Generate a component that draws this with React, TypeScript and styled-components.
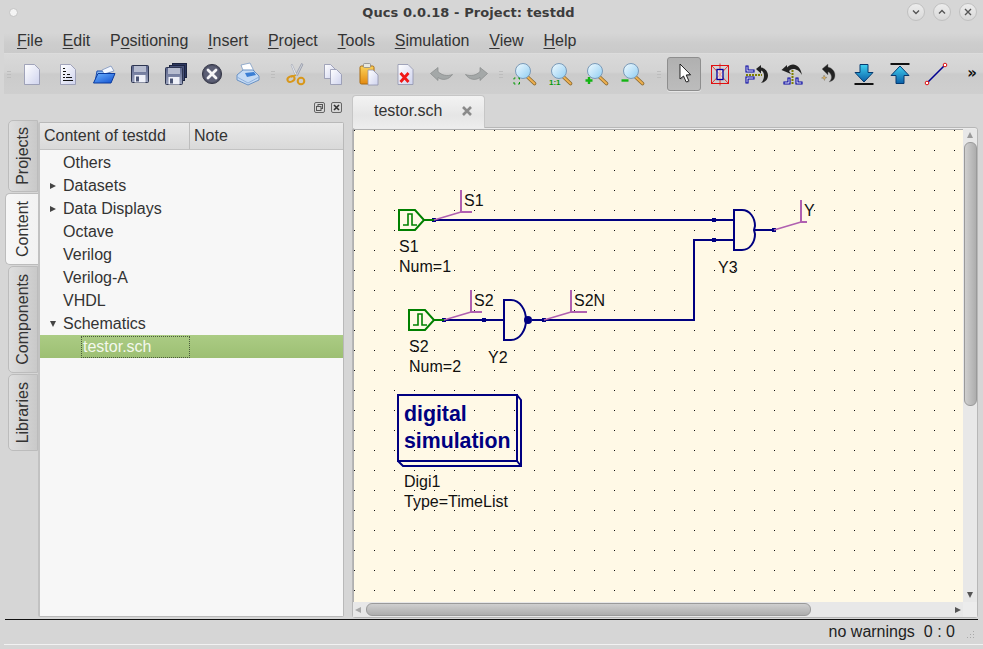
import React from "react";
import styled, { createGlobalStyle } from "styled-components";

const Global = createGlobalStyle`
  html, body { margin: 0; padding: 0; width: 983px; height: 649px; overflow: hidden; background: #d6d6d6; }
  * { box-sizing: border-box; }
  #root { width: 983px; height: 649px; }
`;
const Win = styled.div`
  width: 983px; height: 649px; display: flex; flex-direction: column;
  background: #d6d6d6; color: #2e2e2e;
  font-family: "Liberation Sans", Arial, sans-serif; font-size: 16px;
`;
const TitleBar = styled.div`
  height: 28px; flex: none; display: flex; align-items: center; padding: 0 6px 4px 8px; background: #d6d6d6;
`;
const TitleDot = styled.span`
  width: 9px; height: 9px; border-radius: 50%; background: #f4f4f4; border: 1px solid #c4c4c4; flex: none; margin-left: 1px;
`;
const TitleText = styled.div`
  flex: 1; padding-left: 12px; text-align: center; font-family: "DejaVu Sans", sans-serif; font-weight: 700; font-size: 13px; color: #3c3c3c; letter-spacing: .08px;
`;
const WinBtns = styled.div`display: flex; gap: 8px;`;
const WinBtn = styled.span`
  width: 18px; height: 18px; border-radius: 50%; flex: none; display: flex; align-items: center; justify-content: center;
  background: linear-gradient(#ededed, #d8d8d8); border: 1px solid #c0c0c0; color: #555;
`;
const MenuBar = styled.div`
  height: 26px; flex: none; margin-left: 4px; padding-left: 3px; display: flex; align-items: center;
  background: linear-gradient(#d6d6d6 0%, #d6d6d6 20%, #cdcdcd 60%, #cacaca 100%); border-bottom: 1px solid #dcdcdc;
`;
const MenuItem = styled.span`padding: 0 10px; margin-right: -.2px; color: #333; line-height: 24px;`;
const Mn = styled.span`text-decoration: underline; text-underline-offset: 2px;`;
const ToolBar = styled.div`
  height: 40px; flex: none; margin-left: 4px; display: flex; align-items: center;
  background: linear-gradient(#d9d9d9 0%, #d3d3d3 45%, #cbcbcb 50%, #cfcfcf 100%);
`;
const Slot = styled.div<{ $on?: boolean }>`
  width: 34px; height: 34px; margin: 0 1px; flex: none; display: flex; align-items: center; justify-content: center; border-radius: 3px;
  ${p => p.$on ? "background: linear-gradient(#b0b0b0,#bcbcbc); border: 1px solid #8e8e8e; box-shadow: 0 1px 0 #e6e6e6;" : ""}
`;
const Sep = styled.div<{ $w: number }>`
  width: ${p => p.$w}px; flex: none; align-self: stretch; display: flex; align-items: center; justify-content: center;
  &::before { content: ""; width: 4px; height: 7px; background: repeating-linear-gradient(#bdbdbd 0 1px, transparent 1px 3px); }
`;
const More = styled.span`width: 36px; flex: none; text-align: center; font-weight: 700; font-size: 15px; color: #111; padding-bottom: 3px; font-family: "DejaVu Sans", sans-serif;`;
const Main = styled.div`flex: 1; min-height: 0; display: flex; padding: 0 5px 1px 5px;`;
const Dock = styled.div`width: 347px; flex: none; display: flex; flex-direction: column;`;
const DockTitle = styled.div`height: 26px; flex: none; display: flex; justify-content: flex-end; align-items: flex-start; gap: 6px; padding: 8px 10px 0 0;`;
const DockBody = styled.div`flex: 1; min-height: 0; display: flex; padding-right: 8px;`;
const VTabs = styled.div`width: 33px; flex: none; display: flex; flex-direction: column; gap: 1px;`;
const VTab = styled.div<{ $on?: boolean; $h: number }>`
  height: ${p => p.$h}px; flex: none; display: flex; align-items: center; justify-content: center;
  margin-left: ${p => p.$on ? 0 : 3}px; border: 1px solid #bcbcbc; border-right: ${p => p.$on ? "none" : "1px solid #bcbcbc"};
  border-radius: 5px 0 0 5px; color: #333;
  background: ${p => p.$on ? "linear-gradient(90deg,#f7f7f7,#f2f2f2)" : "linear-gradient(90deg,#dedede,#c9c9c9)"};
  padding-left: ${p => p.$on ? 2 : 0}px;
  span { writing-mode: vertical-rl; transform: rotate(180deg); }
`;
const Tree = styled.div`
  flex: 1; margin-top: 2px; margin-bottom: 1px; background: #f7f7f7; border: 1px solid #b9b9b9; border-left: 2px solid #c2c2c2; display: flex; flex-direction: column; border-radius: 2px;
`;
const THead = styled.div`height: 27px; flex: none; display: flex; background: linear-gradient(#e9e9e9,#d9d9d9); border-bottom: 1px solid #c2c2c2;`;
const THCell = styled.div<{ $w?: number }>`
  ${p => p.$w ? `width:${p.$w}px; border-right:1px solid #bdbdbd;` : "flex:1;"} padding-left: 4px; display: flex; align-items: center; color: #333;
`;
const TRows = styled.div`flex: 1; padding-top: 1px;`;
const TRow = styled.div<{ $sel?: boolean }>`
  height: 23px; display: flex; align-items: center; padding-left: ${p => p.$sel ? 41 : 8}px; color: #333;
  ${p => p.$sel ? "background: linear-gradient(#abcc84,#9dbf73);" : ""}
`;
const Arrow = styled.span<{ $k: string }>`
  width: 10px; flex: none; display: flex; align-items: center; justify-content: center;
  &::before {
    content: ""; display: ${p => p.$k === "n" ? "none" : "block"}; width: 0; height: 0;
    ${p => p.$k === "r"
      ? "border-left: 6px solid #444; border-top: 3.5px solid transparent; border-bottom: 3.5px solid transparent;"
      : "border-top: 6px solid #444; border-left: 3.5px solid transparent; border-right: 3.5px solid transparent;"}
  }
`;
const RowText = styled.span`padding-left: 5px;`;
const SelCell = styled.span`
  width: 109px; height: 22px; display: flex; align-items: center; padding-left: 1px; color: #f4f8ee; border: 1px dotted #4c5c3c;
`;
const Editor = styled.div`width: 626px; flex: none; display: flex; flex-direction: column;`;
const TabBar = styled.div`height: 33px; flex: none; display: flex; align-items: flex-start; padding-top: 1px; position: relative; z-index: 1;`;
const DocTab = styled.div`
  width: 133px; height: 33px; display: flex; align-items: center; justify-content: space-between; padding: 0 11px 2px 21px;
  background: linear-gradient(#f3f3f3,#e6e6e6 60%,#ededed); border: 1px solid #c6c6c6; border-bottom: none; border-radius: 4px 4px 0 0; color: #333;
`;
const Pane = styled.div`
  flex: 1; min-height: 0; border: 1px solid #b7b7b7; border-radius: 3px; background: #ececec; padding-top: 1px;
  display: grid; grid-template-columns: 1fr 14px; grid-template-rows: 1fr 15px;
`;
const Canvas = styled.div`border-left: 1px solid #b0b0b0; border-top: 1px solid #b0b0b0; overflow: hidden; background: #fff9e6;`;
const Sheet = styled.svg`display: block; font-family: "Liberation Sans", Arial, sans-serif; font-size: 16px;`;
const VBar = styled.div`display: flex; flex-direction: column; align-items: center; background: #e8e8e8; padding-top: 3px;`;
const VThumb = styled.div`
  width: 13px; height: 264px; margin-top: 4px; border-radius: 6px; border: 1px solid #9a9a9a; background: linear-gradient(90deg,#cfcfcf,#adadad);
`;
const Spacer = styled.div`flex: 1;`;
const Tri = styled.span<{ $d: string }>`
  width: 0; height: 0; flex: none; display: block;
  ${p => p.$d === "u" ? "border-bottom: 6px solid #9a9a9a; border-left: 3.5px solid transparent; border-right: 3.5px solid transparent;" : ""}
  ${p => p.$d === "d" ? "border-top: 6px solid #555; border-left: 3.5px solid transparent; border-right: 3.5px solid transparent;" : ""}
  ${p => p.$d === "l" ? "border-right: 6px solid #a8a8a8; border-top: 3.5px solid transparent; border-bottom: 3.5px solid transparent;" : ""}
  ${p => p.$d === "r" ? "border-left: 6px solid #555; border-top: 3.5px solid transparent; border-bottom: 3.5px solid transparent;" : ""}
`;
const VEnd = styled.div`height: 15px; flex: none; display: flex; align-items: center;`;
const HBar = styled.div`display: flex; align-items: center; background: #e8e8e8; padding-left: 2px;`;
const HThumb = styled.div`
  width: 445px; height: 13px; margin-left: 5px; border-radius: 6px; border: 1px solid #9a9a9a; background: linear-gradient(#cfcfcf,#adadad);
`;
const HEnd = styled.div`width: 10px; flex: none; display: flex; justify-content: center;`;
const Corner = styled.div`background: #ececec;`;
const BlackLine = styled.div`height: 1px; flex: none; margin: 0 5px; background: #111;`;
const Status = styled.div`
  height: 25px; flex: none; margin-left: 4px; display: flex; align-items: center; justify-content: flex-end; border-bottom: 1px solid #f2f2f2; padding-right: 8px; color: #222;
`;
const StatusText = styled.span`margin-right: 9px;`;
const Grip = styled.svg`margin-left: 3px; margin-top: 6px; flex: none;`;
const Bottom = styled.div`height: 4px; flex: none;`;

const Defs = () => (
  <svg width="0" height="0" style={{ display: "block", height: 0 }}>
    <defs>
      <linearGradient id="pg" x1="0" y1="0" x2="1" y2="1"><stop offset="0" stopColor="#fff" /><stop offset="1" stopColor="#cfd3ee" /></linearGradient>
      <linearGradient id="glass" x1="0" y1="0" x2="1" y2="1"><stop offset="0" stopColor="#f2fbff" /><stop offset="1" stopColor="#8fcdf2" /></linearGradient>
      <linearGradient id="fold" x1="0" y1="0" x2="1" y2="1"><stop offset="0" stopColor="#6fb4ff" /><stop offset="1" stopColor="#0f4fd0" /></linearGradient>
      <linearGradient id="disk" x1="0" y1="0" x2="0" y2="1"><stop offset="0" stopColor="#59638a" /><stop offset="1" stopColor="#9aa2bc" /></linearGradient>
      <linearGradient id="org" x1="0" y1="0" x2="0" y2="1"><stop offset="0" stopColor="#fbd25a" /><stop offset="1" stopColor="#e48a10" /></linearGradient>
      <linearGradient id="ar" x1="0" y1="0" x2="0" y2="1"><stop offset="0" stopColor="#3fd0f0" /><stop offset="1" stopColor="#0a5fa8" /></linearGradient>
    </defs>
  </svg>
);

const I = ({ children }: { children: React.ReactNode }) => <svg width="24" height="24" viewBox="0 0 24 24" fill="none">{children}</svg>;
const Page = ({ x = 4.5, y = 2.5, w = 15, h = 20 }: { x?: number; y?: number; w?: number; h?: number }) => (
  <path d={`M${x} ${y}H${x + w - 5}L${x + w} ${y + 5}V${y + h}H${x}Z`} fill="url(#pg)" stroke="#8f93ad" strokeWidth=".8" />
);
const Floppy = ({ x = 0, y = 0 }: { x?: number; y?: number }) => (
  <g transform={`translate(${x} ${y})`}>
    <rect x="3.5" y="3.5" width="17" height="17" rx="1" fill="url(#disk)" stroke="#2d3550" />
    <rect x="6" y="4" width="12" height="6" fill="#b6bccf" />
    <rect x="6.5" y="13" width="11" height="7.5" fill="#eef0f8" />
    <rect x="8" y="14.5" width="3" height="5" fill="#4a5474" />
  </g>
);
const Mag = ({ children }: { children?: React.ReactNode }) => (
  <I>
    <path d="M14 14.5l7.5 7" stroke="#8a6a30" strokeWidth="3.6" strokeLinecap="round" />
    <path d="M14 14.5l7.5 7" stroke="#eeb050" strokeWidth="2" strokeLinecap="round" />
    <circle cx="10" cy="9" r="7.5" fill="url(#glass)" stroke="#7a9ab8" />
    {children}
  </I>
);
const Curve = ({ flip }: { flip?: boolean }) => (
  <I>
    <g transform={flip ? "matrix(-1 0 0 1 24 0)" : undefined}>
      <path d="M1.5 11.5L9 5.5V9.5C13 13.5 18 14.5 23.500 12.500C20 17.500 14 19 9 15.500V18.500Z" fill="#a4a8a8" stroke="#868a8a" strokeWidth=".7" />
    </g>
  </I>
);

const icons: React.ReactNode[] = [
  <I><Page /></I>,
  <I><Page /><g fill="#111"><rect x="7" y="6" width="2" height="1" /><rect x="7" y="9" width="3" height="1" /><rect x="7" y="12" width="2" height="1" /><rect x="11" y="12" width="3" height="1" /><rect x="7" y="15" width="2" height="1" /><rect x="10" y="15" width="6" height="1" /><rect x="7" y="18" width="10" height="1" /></g></I>,
  <I><path d="M3 20L5 9h5l1 1h7l-1 2" fill="#8cbcf0" stroke="#1a4db0" /><path d="M10 8l9-4 3 5-10 3z" fill="#f4f8ff" stroke="#6d86b8" strokeWidth=".7" /><path d="M1.5 21L6 11.5h17L19 21z" fill="url(#fold)" stroke="#0b3a9c" /></I>,
  <I><Floppy /></I>,
  <I><rect x="8.5" y="1.5" width="14" height="14" fill="#2d3860" stroke="#1c2440" /><rect x="5.5" y="3.5" width="15" height="15" fill="#48527a" stroke="#1c2440" /><Floppy x={-2} y={2} /></I>,
  <I><circle cx="12" cy="12" r="9.6" fill="#4b4e62" stroke="#383a4a" /><circle cx="12" cy="12" r="8" fill="#5c5f75" /><path d="M8 8l8 8M16 8l-8 8" stroke="#f6f6f8" strokeWidth="2.8" strokeLinecap="round" /></I>,
  <I><path d="M5 3l9-2 4 8-10 2z" fill="#fff" stroke="#7d9cc4" strokeWidth=".8" /><path d="M1 13l6-5 10 0 6 6v4l-11 5-11-5z" fill="#c4daf4" stroke="#6a92c4" /><path d="M1 15l11 6 11-6" stroke="#8eb0dc" fill="none" /><path d="M9 11l9-1 2 3-9 2z" fill="#3a7ed4" /></I>,
  <I><path d="M16.5 1.5L11 12l1.5 1.5L18 2.5z" fill="#c8ccd4" stroke="#83889a" strokeWidth=".6" /><path d="M7 2l5 11-1.5 1L6 3z" fill="#eef0f4" stroke="#9da2b0" strokeWidth=".6" /><path d="M11 13l-5 2" stroke="#d6a020" strokeWidth="1.5" /><ellipse cx="6" cy="17" rx="3.7" ry="2.6" stroke="#d8971a" strokeWidth="2" transform="rotate(-25 6 17)" /><ellipse cx="16" cy="19" rx="3.3" ry="3.3" stroke="#d8971a" strokeWidth="2" /></I>,
  <I><Page x={3.5} y={2.5} w={11} h={14} /><Page x={9.5} y={7.5} w={11} h={15} /></I>,
  <I><rect x="3" y="4" width="14" height="18" rx="1.5" fill="url(#org)" stroke="#a86a10" /><rect x="6.5" y="1.5" width="7" height="4" rx="1" fill="#e8e8e0" stroke="#808080" strokeWidth=".7" /><Page x={11} y={8} w={10} h={15} /></I>,
  <I><Page x={5} y={2.5} w={15} h={20} /><path d="M7.5 11l8 9M15.5 11l-8 9" stroke="#f01818" strokeWidth="2.8" /></I>,
  <Curve />,
  <Curve flip />,
  <Mag><path d="M1 17.5v-1.5h1.5M5 16h1.5v1.5M1 20v2h1.5M5 22h1.5v-2" stroke="#0a9a0a" /></Mag>,
  <Mag><text x="0" y="23" fontSize="8" fontWeight="700" fill="#0a9a0a" fontFamily="'Liberation Sans', sans-serif">1:1</text></Mag>,
  <Mag><path d="M4 15v7M.5 18.5h7" stroke="#14b414" strokeWidth="2.4" /></Mag>,
  <Mag><path d="M.5 18.5h7" stroke="#14b414" strokeWidth="2.4" /></Mag>,
  <I><path d="M8 2v15l3.5-3 2.7 6 2.6-1.2-2.6-5.8 4.3-.4z" fill="#50505a" opacity=".35" transform="translate(1 1)" /><path d="M8 2v15l3.5-3 2.7 6 2.6-1.2-2.6-5.8 4.3-.4z" fill="#fff" stroke="#111" strokeWidth=".9" /></I>,
  <I><rect x="3.5" y="3.5" width="17" height="18" stroke="#e01010" /><path d="M3.5 3.5l17 18M20.5 3.5l-17 18M12 1.5v22" stroke="#e01010" strokeWidth=".8" /><rect x="9" y="7.5" width="6" height="10" fill="#fff" fillOpacity=".5" stroke="#0000a0" strokeWidth="1.3" /></I>,
  <I><path d="M2 4H4V8H10V10H2ZM2 15H10V17H4V21H2Z" fill="#fff" stroke="#0000a0" strokeWidth="1.1" /><path d="M2 13H18" stroke="#808000" strokeWidth="2" strokeDasharray="2 1" /><path d="M12 7l5-4v2.5c4 .5 7 4 7 8 0 4-3 7-7 7.5 2-2 3-4.5 3-7 0-3-1-5-3-5.5v3z" fill="#222" /></I>,
  <I><path d="M8 16h2v6H4v-2h4zM16 16h2v4h4v2h-6z" fill="#fff" stroke="#0000a0" strokeWidth="1.1" /><path d="M12.5 5V23" stroke="#808000" strokeWidth="2" strokeDasharray="2 1" /><path d="M1.5 8L7 3V5.5C12 0 20 2 22 13C19 7 12 5 9 9L11 12Z" fill="#222" /></I>,
  <I><path d="M6 7l6-5v3c4 1 7 4 7 8 0 4-2 6-6 7 2-2 3-4 2-7-1-2-2-3-3-3v3z" fill="#222" stroke="#777" strokeWidth=".4" /><path d="M8 13l1 2 2 .5-2 1-.5 2-1-2-2-.5 2-1z" fill="#d8b060" stroke="#555" strokeWidth=".3" /></I>,
  <I><path d="M8 2.5h8v8h5L12 20 3 10.5h5z" fill="url(#ar)" stroke="#063a70" /><rect x="2.5" y="21" width="19" height="2" fill="#111" /></I>,
  <I><path d="M8 21.5h8v-8h5L12 4 3 13.5h5z" fill="url(#ar)" stroke="#063a70" /><rect x="2.5" y="1" width="19" height="2" fill="#111" /></I>,
  <I><path d="M3 21L21 3" stroke="#000090" strokeWidth="1.6" /><circle cx="3" cy="21" r="1.8" fill="#fff" stroke="#e01010" /><circle cx="21" cy="3" r="1.8" fill="#fff" stroke="#e01010" /></I>,
];
const groups: [number, number, number][] = [[0, 7, 13], [7, 13, 12], [13, 17, 15], [17, 25, 0]];
const menus = [["F", "ile"], ["E", "dit"], ["P", "ositioning"], ["I", "nsert"], ["P", "roject"], ["T", "ools"], ["S", "imulation"], ["V", "iew"], ["H", "elp"]] as const;
const rows: [string, string][] = [["n", "Others"], ["r", "Datasets"], ["r", "Data Displays"], ["n", "Octave"], ["n", "Verilog"], ["n", "Verilog-A"], ["n", "VHDL"], ["d", "Schematics"]];
const vtabs: [string, number, boolean][] = [["Projects", 72, false], ["Content", 72, true], ["Components", 107, false], ["Libraries", 77, false]];

const NAVY = "#000080";
const PUR = "#b060b0";
const Wire = ({ d }: { d: string }) => <path d={d} stroke={NAVY} strokeWidth="2" fill="none" />;
const Node = ({ x, y }: { x: number; y: number }) => <rect x={x - 2} y={y - 2} width="4" height="4" fill={NAVY} />;
const WireLabel = ({ x, y, w, t }: { x: number; y: number; w: number; t: string }) => (
  <g>
    <path d={`M${x} ${y}L${x + 27} ${y - 8}`} stroke={PUR} strokeWidth="1.5" fill="none" />
    <path d={`M${x + 27} ${y - 30}V${y - 8}H${x + 27 + w}`} stroke={PUR} strokeWidth="2" fill="none" />
    <text x={x + 30} y={y - 14} fill="#111">{t}</text>
  </g>
);
const Port = ({ x, y }: { x: number; y: number }) => (
  <g transform={`translate(${x} ${y})`} fill="none">
    <path d="M0 0H16L25 10L16 20H0Z" stroke="#008000" strokeWidth="2" />
    <path d="M4 15H9V4H13V15H18" stroke="#008000" strokeWidth="1.6" />
    <path d="M25 10H35" stroke="#008000" strokeWidth="2" />
  </g>
);

const Schematic = () => (
  <Sheet width="609" height="472" viewBox="354 130 609 472">
    <defs>
      <pattern id="dots" x="354" y="130" width="20" height="20" patternUnits="userSpaceOnUse">
        <rect x="0" y="0" width="1" height="1" fill="#111" />
      </pattern>
    </defs>
    <rect x="354" y="130" width="609" height="472" fill="url(#dots)" />
    <Wire d="M434 220H734" /><Node x={434} y={220} /><Node x={714} y={220} />
    <Wire d="M734 240H694V320H532" /><Node x={714} y={240} /><Node x={544} y={320} />
    <Wire d="M444 320H503" /><Node x={444} y={320} /><Node x={484} y={320} />
    <Wire d="M755 230H774" /><Node x={774} y={230} />
    <Port x={399} y={210} />
    <Port x={409} y={310} />
    <WireLabel x={434} y={220} w={11} t="S1" />
    <WireLabel x={444} y={320} w={11} t="S2" />
    <WireLabel x={544} y={320} w={16} t="S2N" />
    <WireLabel x={774} y={230} w={6} t="Y" />
    <path d="M504 300H511C520 300 526 310 526 320C526 330 520 340 511 340H504Z" stroke={NAVY} strokeWidth="2" fill="none" />
    <circle cx="528" cy="320" r="4" fill={NAVY} />
    <path d="M734 210H742C750 210 755 218 755 226L754 230L755 234C755 242 750 250 742 250H734Z" stroke={NAVY} strokeWidth="2" fill="none" />
    <text x="399" y="252" fill="#111">S1</text>
    <text x="399" y="272" fill="#111">Num=1</text>
    <text x="409" y="352" fill="#111">S2</text>
    <text x="409" y="372" fill="#111">Num=2</text>
    <text x="488" y="363" fill="#111">Y2</text>
    <text x="718" y="273" fill="#111">Y3</text>
    <path d="M398 395H517V461H398ZM517 395L521 400V466H403L398 461M517 461L521 466" stroke={NAVY} strokeWidth="2" fill="none" />
    <text x="404" y="421" fill={NAVY} fontWeight="700" fontSize="21.3">digital</text>
    <text x="404" y="448" fill={NAVY} fontWeight="700" fontSize="21.3">simulation</text>
    <text x="404" y="487" fill="#111">Digi1</text>
    <text x="404" y="507" fill="#111">Type=TimeList</text>
  </Sheet>
);

export default function App() {
  return (
    <Win>
      <Global />
      <Defs />
      <TitleBar>
        <TitleDot />
        <TitleText>Qucs 0.0.18 - Project: testdd</TitleText>
        <WinBtns>
          <WinBtn><svg width="10" height="10" viewBox="0 0 10 10"><path d="M2 3.5L5 6.5L8 3.5" stroke="#555" strokeWidth="1.4" fill="none" /></svg></WinBtn>
          <WinBtn><svg width="10" height="10" viewBox="0 0 10 10"><path d="M2 6.5L5 3.5L8 6.5" stroke="#555" strokeWidth="1.4" fill="none" /></svg></WinBtn>
          <WinBtn><svg width="10" height="10" viewBox="0 0 10 10"><path d="M2 2L8 8M8 2L2 8" stroke="#555" strokeWidth="1.4" fill="none" /></svg></WinBtn>
        </WinBtns>
      </TitleBar>
      <MenuBar>
        {menus.map(m => (
          <MenuItem key={m[0] + m[1]}>
            {m[1] === "ositioning" ? <>P<Mn>o</Mn>sitioning</> : <><Mn>{m[0]}</Mn>{m[1]}</>}
          </MenuItem>
        ))}
      </MenuBar>
      <ToolBar>
        <Sep $w={10} />
        {groups.map(([a, b, w], g) => (
          <React.Fragment key={g}>
            {icons.slice(a, b).map((ic, i) => <Slot key={i} $on={a + i === 17}>{ic}</Slot>)}
            {w > 0 && <Sep $w={w} />}
          </React.Fragment>
        ))}
        <More>»</More>
      </ToolBar>
      <Main>
        <Dock>
          <DockTitle>
            <svg width="11" height="11" viewBox="0 0 11 11" fill="none"><rect x=".5" y=".5" width="10" height="10" rx="1.5" stroke="#666" /><rect x="4" y="2.5" width="4.5" height="4" stroke="#555" /><rect x="2.5" y="4.5" width="4.5" height="4" fill="#d6d6d6" stroke="#555" /></svg>
            <svg width="11" height="11" viewBox="0 0 11 11" fill="none"><rect x=".5" y=".5" width="10" height="10" rx="1.5" stroke="#666" /><path d="M3 3L8 8M8 3L3 8" stroke="#333" strokeWidth="1.6" /></svg>
          </DockTitle>
          <DockBody>
            <VTabs>
              {vtabs.map(([t, h, on]) => <VTab key={t} $h={h} $on={on}><span>{t}</span></VTab>)}
            </VTabs>
            <Tree>
              <THead><THCell $w={150}>Content of testdd</THCell><THCell>Note</THCell></THead>
              <TRows>
                {rows.map(([k, t]) => <TRow key={t}><Arrow $k={k} /><RowText>{t}</RowText></TRow>)}
                <TRow $sel><SelCell>testor.sch</SelCell></TRow>
              </TRows>
            </Tree>
          </DockBody>
        </Dock>
        <Editor>
          <TabBar>
            <DocTab>testor.sch
              <svg width="12" height="12" viewBox="0 0 12 12"><path d="M2 2L10 10M10 2L2 10" stroke="#8a8a8a" strokeWidth="2.6" /></svg>
            </DocTab>
          </TabBar>
          <Pane>
            <Canvas><Schematic /></Canvas>
            <VBar>
              <Tri $d="u" />
              <VThumb />
              <Spacer />
              <VEnd><Tri $d="d" /></VEnd>
            </VBar>
            <HBar>
              <Tri $d="l" />
              <HThumb />
              <Spacer />
              <HEnd><Tri $d="r" /></HEnd>
            </HBar>
            <Corner />
          </Pane>
        </Editor>
      </Main>
      <BlackLine />
      <Status>
        <StatusText>no warnings</StatusText>
        <StatusText>0 : 0</StatusText>
        <Grip width="8" height="8" viewBox="0 0 8 8"><g fill="#a8a8a8"><rect x="6" y="0" width="1" height="1" /><rect x="3" y="3" width="1" height="1" /><rect x="6" y="3" width="1" height="1" /><rect x="0" y="6" width="1" height="1" /><rect x="3" y="6" width="1" height="1" /><rect x="6" y="6" width="1" height="1" /></g></Grip>
      </Status>
      <Bottom />
    </Win>
  );
}
